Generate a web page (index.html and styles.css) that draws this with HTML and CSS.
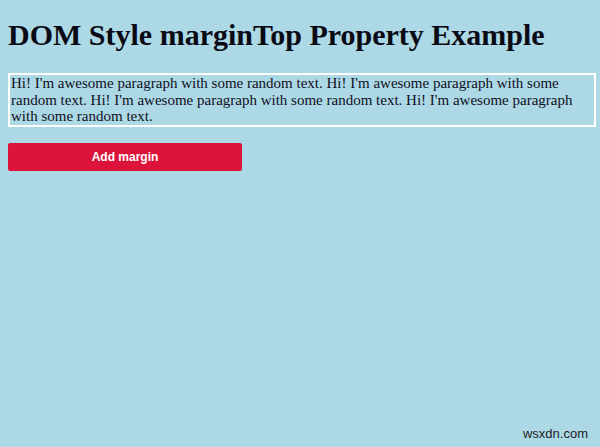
FILE: index.html
```html
<!DOCTYPE html>
<html>
<head>
<meta charset="utf-8">
<title>DOM Style marginTop Property Example</title>
<link rel="stylesheet" href="styles.css">
</head>
<body>
<h1 class="title">DOM Style marginTop Property Example</h1>
<p class="sample">Hi! I'm awesome paragraph with some random text. Hi! I'm awesome paragraph with some random text. Hi! I'm awesome paragraph with some random text. Hi! I'm awesome paragraph with some random text.</p>
<button class="action" type="button">Add margin</button>
<div class="credit">wsxdn.com</div>
</body>
</html>
```
FILE: styles.css
```css
html, body {
  height: 100%;
}
body {
  margin: 0;
  padding: 0 4px 0 8px;
  background: #add8e6;
  font-family: "Liberation Serif", "Times New Roman", serif;
  color: #000;
  box-sizing: border-box;
  position: relative;
}
.title {
  margin: 0;
  padding-top: 18px;
  font-size: 30px;
  line-height: 34px;
  font-weight: bold;
  color: #0a0a14;
}
.sample {
  margin: 21px 0 0;
  border: 2px solid #fff;
  font-size: 15px;
  line-height: 16.6px;
  padding: 0 0 0 1px;
  color: #10101c;
}
.action {
  display: block;
  margin-top: 16px;
  width: 234px;
  height: 28px;
  border: none;
  border-radius: 2px;
  background: #dc143c;
  color: #fff;
  font-family: "Liberation Sans", Arial, sans-serif;
  font-weight: bold;
  font-size: 12px;
}
.credit {
  position: absolute;
  right: 12px;
  bottom: 6px;
  font-family: "Liberation Sans", Arial, sans-serif;
  font-size: 13px;
  color: #222;
}
```
